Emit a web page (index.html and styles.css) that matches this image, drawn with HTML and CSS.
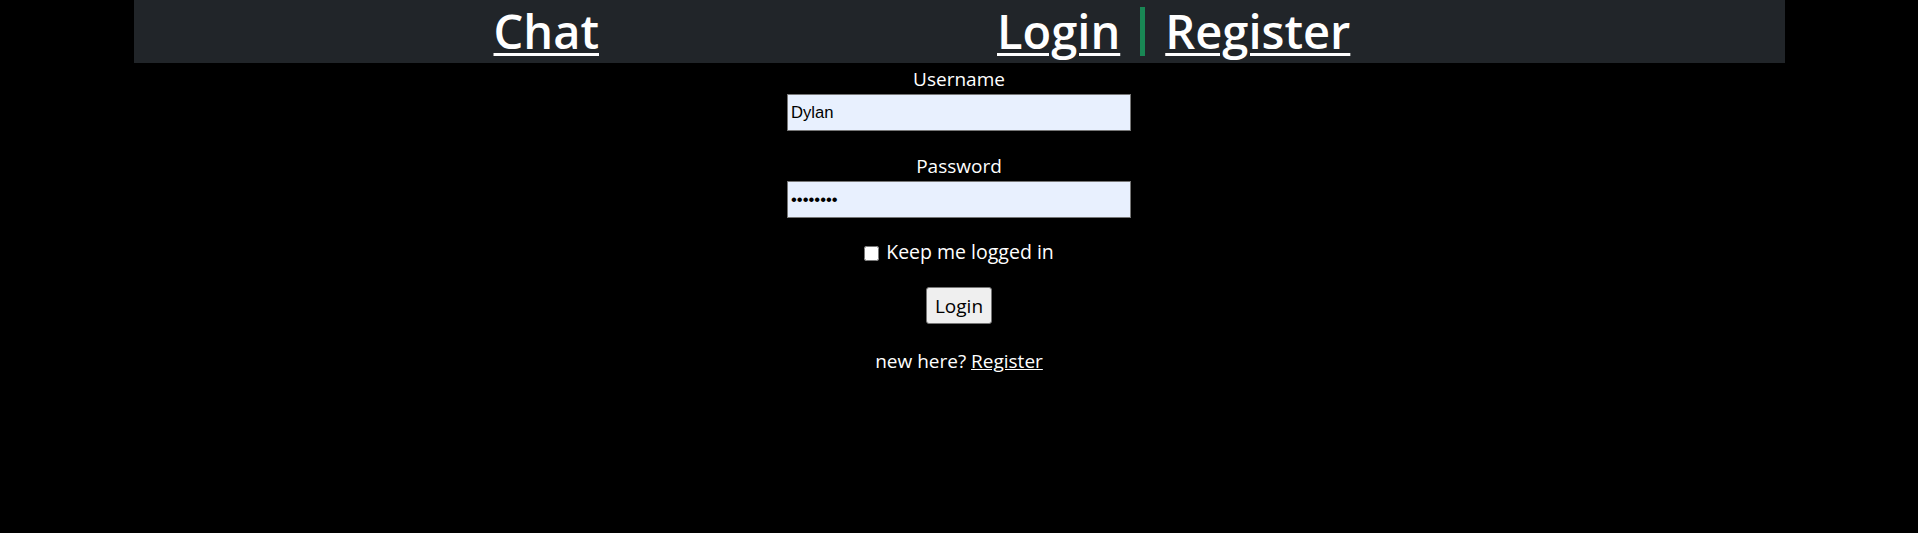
FILE: index.html
```html
<!DOCTYPE html>
<html lang="en">
<head>
<meta charset="utf-8">
<title>Chat - Login</title>
<link rel="stylesheet" href="styles.css">
</head>
<body>
<header class="topbar">
  <div class="half">
    <a class="brand" href="#">Chat</a>
  </div>
  <div class="half right">
    <a class="brand" href="#">Login</a>
    <span class="sep"></span>
    <a class="brand" href="#">Register</a>
  </div>
</header>
<form class="login">
  <div class="group">
    <label class="lbl" for="u">Username</label>
    <input class="field" id="u" type="text" value="Dylan">
  </div>
  <div class="group tight">
    <label class="lbl" for="p">Password</label>
    <input class="field" id="p" type="password" value="password">
  </div>
  <div class="group row">
    <input class="check" id="k" type="checkbox">
    <label class="lbl" for="k">Keep me logged in</label>
  </div>
  <div class="group">
    <button class="btn" type="button">Login</button>
  </div>
  <p class="lbl note">new here? <a class="link" href="#">Register</a></p>
</form>
</body>
</html>
```

FILE: styles.css
```css
html, body {
  margin: 0;
  padding: 0;
  background: #000;
}
body {
  font-family: "Open Sans", "Noto Sans", sans-serif;
  color: #fff;
}
.topbar {
  width: 1651px;
  height: 63px;
  margin: 0 auto;
  background: #212529;
  display: flex;
}
.half {
  box-sizing: border-box;
  width: 50%;
  display: flex;
  justify-content: center;
  align-items: center;
  gap: 20px;
}
.half.right {
  justify-content: flex-start;
  padding-left: 38px;
}
.brand {
  color: #fff;
  font-size: 47px;
  font-weight: 600;
  line-height: 63px;
  text-decoration: underline;
  text-decoration-thickness: 3px;
  text-underline-offset: 4px;
}
.sep {
  display: inline-block;
  width: 5px;
  height: 49px;
  background: #198754;
}
.login {
  display: flex;
  flex-direction: column;
  align-items: center;
  margin: 0;
  padding-top: 1px;
}
.group {
  display: flex;
  flex-direction: column;
  align-items: center;
  margin-bottom: 20px;
}
.group.tight {
  margin-bottom: 19px;
}
.group.row {
  flex-direction: row;
}
.lbl {
  font-size: 19px;
  line-height: 30px;
  padding-top: 1px;
  margin-top: -1px;
}
.group.row .lbl {
  font-size: 19.5px;
}
.field {
  box-sizing: border-box;
  width: 344px;
  height: 37px;
  margin: 0;
  padding: 0 3px;
  border: 1px solid #767676;
  background: #e8f0fe;
  color: #000;
  font-family: "Liberation Sans", Arial, sans-serif;
  font-size: 16.67px;
  outline: none;
}
.check {
  width: 15px;
  height: 15px;
  margin: 2px 7px 0 0;
}
.btn {
  box-sizing: border-box;
  height: 37px;
  padding: 0 8px;
  background: #efefef;
  border: 1px solid #767676;
  border-radius: 3px;
  color: #000;
  font-family: "Open Sans", "Noto Sans", sans-serif;
  font-size: 19px;
}
.note {
  margin: 1px 0 0;
}
.link {
  color: #fff;
  text-decoration: underline;
}
```
